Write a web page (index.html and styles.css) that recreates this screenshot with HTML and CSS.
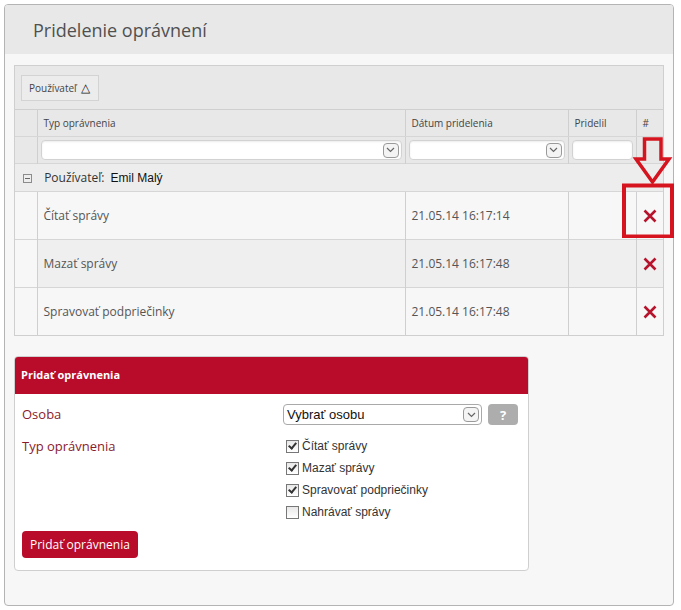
FILE: index.html
```html
<!DOCTYPE html>
<html lang="sk">
<head>
    <meta charset="UTF-8">
    <title>Pridelenie oprávnení</title>
    <link rel="stylesheet" href="styles.css">
</head>
<body>
    <div class="panel">
        <div class="panel-head">
            <h2>Pridelenie oprávnení</h2>
        </div>
        <div class="panel-body">
            <div class="grid">
                <div class="group-panel">
                    <span class="group-btn">Používateľ <span class="sort">&#9651;</span></span>
                </div>
                <table class="grid-table">
                    <colgroup>
                        <col class="c-indent">
                        <col class="c-type">
                        <col class="c-date">
                        <col class="c-by">
                        <col class="c-del">
                    </colgroup>
                    <thead>
                        <tr class="head-row">
                            <th></th>
                            <th>Typ oprávnenia</th>
                            <th>Dátum pridelenia</th>
                            <th>Pridelil</th>
                            <th>#</th>
                        </tr>
                        <tr class="filter-row">
                            <th></th>
                            <th><div class="filter"><span class="drop"><svg width="9" height="6" viewBox="0 0 9 6"><path d="M1 1l3.5 3.5L8 1" fill="none" stroke="#666" stroke-width="1.2"/></svg></span></div></th>
                            <th><div class="filter"><span class="drop"><svg width="9" height="6" viewBox="0 0 9 6"><path d="M1 1l3.5 3.5L8 1" fill="none" stroke="#666" stroke-width="1.2"/></svg></span></div></th>
                            <th><div class="filter"></div></th>
                            <th></th>
                        </tr>
                    </thead>
                    <tbody>
                        <tr class="group-row">
                            <td colspan="5">
                                <span class="collapse"></span>
                                <span class="group-label">Používateľ:</span>
                                <span class="group-value">Emil Malý</span>
                            </td>
                        </tr>
                        <tr class="data-row">
                            <td></td>
                            <td>Čítať správy</td>
                            <td>21.05.14 16:17:14</td>
                            <td></td>
                            <td class="del"><svg width="16" height="16" viewBox="0 0 16 16"><path d="M2.5 2.5L13.5 13.5M13.5 2.5L2.5 13.5" stroke="#b5142c" stroke-width="2.6"/></svg></td>
                        </tr>
                        <tr class="data-row alt">
                            <td></td>
                            <td>Mazať správy</td>
                            <td>21.05.14 16:17:48</td>
                            <td></td>
                            <td class="del"><svg width="16" height="16" viewBox="0 0 16 16"><path d="M2.5 2.5L13.5 13.5M13.5 2.5L2.5 13.5" stroke="#b5142c" stroke-width="2.6"/></svg></td>
                        </tr>
                        <tr class="data-row">
                            <td></td>
                            <td>Spravovať podpriečinky</td>
                            <td>21.05.14 16:17:48</td>
                            <td></td>
                            <td class="del"><svg width="16" height="16" viewBox="0 0 16 16"><path d="M2.5 2.5L13.5 13.5M13.5 2.5L2.5 13.5" stroke="#b5142c" stroke-width="2.6"/></svg></td>
                        </tr>
                    </tbody>
                </table>
            </div>

            <div class="add-box">
                <div class="add-head">Pridať oprávnenia</div>
                <div class="add-body">
                    <div class="form-grid">
                        <label class="form-label">Osoba</label>
                        <div class="select-line">
                            <div class="select">
                                <span>Vybrať osobu</span>
                                <span class="drop"><svg width="9" height="6" viewBox="0 0 9 6"><path d="M1 1l3.5 3.5L8 1" fill="none" stroke="#666" stroke-width="1.2"/></svg></span>
                            </div>
                            <span class="help">?</span>
                        </div>
                        <label class="form-label type-label">Typ oprávnenia</label>
                        <ul class="checks">
                            <li><span class="box checked"></span>Čítať správy</li>
                            <li><span class="box checked"></span>Mazať správy</li>
                            <li><span class="box checked"></span>Spravovať podpriečinky</li>
                            <li><span class="box"></span>Nahrávať správy</li>
                        </ul>
                    </div>
                    <button class="add-btn">Pridať oprávnenia</button>
                </div>
            </div>
        </div>
    </div>

    <svg class="callout" width="60" height="112" viewBox="0 0 60 112">
        <path d="M24.5 13H41V33H49L32.5 56L16 33H24.5Z" fill="none" stroke="#d6141f" stroke-width="3.5"/>
        <rect x="4" y="59.5" width="48" height="51" fill="none" stroke="#d6141f" stroke-width="4"/>
    </svg>
</body>
</html>
```

FILE: styles.css
```css
body {
    margin: 0;
    background-color: #fff;
    font-family: "Open Sans", Arial, sans-serif;
    color: #555;
}

.panel {
    margin: 4px 0 0 4px;
    width: 668px;
    height: 600px;
    border: 1px solid #b4b4b4;
    border-radius: 4px;
    background-color: #f7f7f7;
    overflow: hidden;
}

.panel-head {
    height: 49px;
    background-color: #e8e8e8;
    display: flex;
    align-items: center;
    padding-left: 28px;
}

.panel-head h2 {
    margin: 0;
    font-size: 18px;
    font-weight: 400;
    color: #505050;
}

.panel-body {
    padding: 11px 9px 0 9px;
}

/* grid */
.grid {
    width: 648px;
    border: 1px solid #cfcfcf;
    background-color: #f7f7f7;
}

.group-panel {
    height: 43px;
    background-color: #e8e8e8;
    display: flex;
    align-items: center;
    padding-left: 6px;
    border-bottom: 1px solid #cfcfcf;
}

.group-btn {
    display: inline-flex;
    align-items: center;
    gap: 4px;
    height: 26px;
    padding: 0 7px;
    border: 1px solid #d3d3d3;
    background-color: #ececec;
    font-size: 10px;
    color: #444;
    box-sizing: border-box;
    width: 78px;
}

.group-btn .sort {
    font-size: 12px;
    color: #222;
}

.grid-table {
    width: 648px;
    table-layout: fixed;
    border-collapse: collapse;
}

.c-indent { width: 22px; }
.c-type { width: 368px; }
.c-date { width: 163px; }
.c-by { width: 68px; }
.c-del { width: 27px; }

.grid-table th {
    background-color: #e8e8e8;
    font-weight: 400;
    font-size: 10px;
    color: #444;
    text-align: left;
    padding: 0 3px;
    border-left: 1px solid #cfcfcf;
}

.grid-table th:first-child,
.grid-table td:first-child {
    border-left: none;
}

.head-row th {
    height: 26px;
    padding-left: 6px;
    border-bottom: 1px solid #d6d6d6;
}

.filter-row th {
    height: 26px;
}

.filter {
    height: 18px;
    background-color: #fff;
    border: 1px solid #d2d2d2;
    border-radius: 4px;
    box-shadow: inset 0 1px 2px rgba(0, 0, 0, 0.08);
    display: flex;
    align-items: center;
    justify-content: flex-end;
    padding-right: 2px;
}

.drop {
    display: inline-flex;
    align-items: center;
    justify-content: center;
    width: 14px;
    height: 13px;
    border: 1px solid #9a9a9a;
    border-radius: 4px;
    background-color: #f4f4f4;
}

.group-row td {
    height: 27px;
    background-color: #ededed;
    border-top: 1px solid #d6d6d6;
    padding: 0 0 0 8px;
    font-size: 12px;
}

.collapse {
    display: inline-block;
    width: 7px;
    height: 7px;
    border: 1px solid #8c8c8c;
    position: relative;
    vertical-align: -1px;
    margin-right: 9px;
}

.collapse::after {
    content: "";
    position: absolute;
    left: 1px;
    top: 3px;
    width: 5px;
    height: 1px;
    background-color: #666;
}

.group-label {
    color: #333;
    margin-right: 3px;
}

.group-value {
    font-family: "Liberation Sans", Arial, sans-serif;
    font-weight: 400;
    color: #111;
}

.data-row td {
    height: 47px;
    border-top: 1px solid #d6d6d6;
    border-left: 1px solid #cfcfcf;
    font-size: 12px;
    color: #555;
    padding: 0 6px;
    white-space: nowrap;
}

.data-row.alt td {
    background-color: #efefef;
}

.data-row.alt td:first-child {
    background-color: #f7f7f7;
}

.data-row td.del {
    padding: 0;
    text-align: center;
}

.data-row td.del svg {
    display: block;
    margin: 0 auto;
}

/* add form */
.add-box {
    margin-top: 20px;
    width: 513px;
    border: 1px solid #cfcfcf;
    border-radius: 4px;
    background-color: #fff;
    overflow: hidden;
}

.add-head {
    height: 37px;
    background-color: #b80c2a;
    color: #fff;
    font-size: 11px;
    font-weight: 700;
    display: flex;
    align-items: center;
    padding: 0 0 3px 6px;
    box-sizing: border-box;
}

.add-body {
    padding: 10px 7px 12px 7px;
}

.form-grid {
    display: grid;
    grid-template-columns: 261px 1fr;
    row-gap: 10px;
}

.form-label {
    font-size: 13px;
    color: #8a1b2c;
    line-height: 21px;
}

.type-label {
    line-height: 22px;
}

.select-line {
    display: flex;
    align-items: center;
    gap: 6px;
}

.select {
    width: 192px;
    height: 19px;
    border: 1px solid #a9a9a9;
    border-radius: 4px;
    display: flex;
    align-items: center;
    justify-content: space-between;
    padding: 0 2px 0 3px;
    font-family: "Liberation Sans", Arial, sans-serif;
    font-size: 13px;
    color: #111;
}

.help {
    width: 30px;
    height: 21px;
    border-radius: 4px;
    background-color: #adadad;
    color: #fff;
    font-weight: 700;
    font-size: 13px;
    display: flex;
    align-items: center;
    justify-content: center;
}

.checks {
    list-style: none;
    margin: 0;
    padding: 0 0 0 3px;
    font-family: Tahoma, "Liberation Sans", sans-serif;
    font-size: 12px;
    color: #333;
}

.checks li {
    height: 22px;
    display: flex;
    align-items: center;
}

.box {
    width: 11px;
    height: 11px;
    border: 1px solid #777;
    background: linear-gradient(#e8e8e8, #fff);
    margin-right: 3px;
    position: relative;
}

.box.checked::after {
    content: "";
    position: absolute;
    left: 3px;
    top: 0px;
    width: 3px;
    height: 6px;
    border: solid #333;
    border-width: 0 2px 2px 0;
    transform: rotate(40deg);
}

.add-btn {
    margin-top: 8px;
    height: 27px;
    padding: 0 8px;
    border: none;
    border-radius: 4px;
    background-color: #b80c2a;
    color: #fff;
    font-family: "Open Sans", Arial, sans-serif;
    font-size: 12px;
    cursor: pointer;
}

.callout {
    position: absolute;
    left: 620px;
    top: 126px;
}
```
